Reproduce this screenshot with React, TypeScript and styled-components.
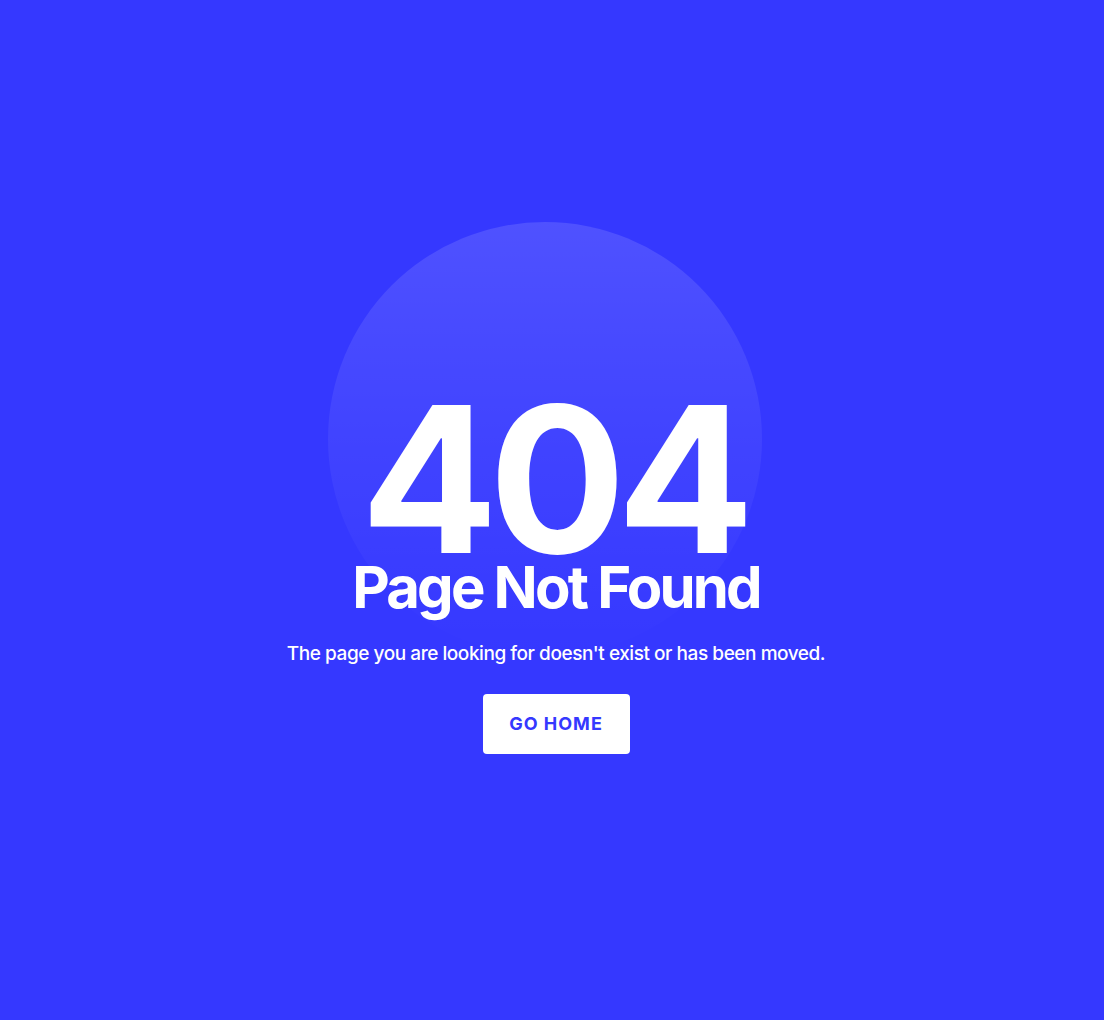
import styled, { createGlobalStyle } from 'styled-components';

const GlobalStyle = createGlobalStyle`
  html, body {
    margin: 0;
    padding: 0;
    background: #3538ff;
  }
  body {
    font-family: Inter, "Noto Sans", "Liberation Sans", sans-serif;
  }
`;

const Page = styled.main`
  min-height: 1020px;
  box-sizing: border-box;
  display: flex;
  flex-direction: column;
  align-items: center;
  padding: 222px 0 0 8px;
  background: #3538ff;
  color: #fff;
`;

const Hero = styled.div`
  position: relative;
  display: flex;
  flex-direction: column;
  align-items: center;
`;

const Glow = styled.div`
  position: absolute;
  top: 0;
  left: 50%;
  width: 434px;
  height: 434px;
  margin-left: -228px;
  border-radius: 50%;
  background: linear-gradient(
    180deg,
    rgba(255, 255, 255, 0.13) 0%,
    rgba(255, 255, 255, 0.06) 50%,
    rgba(255, 255, 255, 0) 100%
  );
  pointer-events: none;
`;

const Code = styled.h1`
  position: relative;
  margin: 181px 0 0;
  padding-right: 6px;
  font-size: 203px;
  font-weight: 700;
  line-height: 0.75;
  letter-spacing: -9px;
`;

const Title = styled.h2`
  position: relative;
  margin: 9px 0 0;
  font-size: 58px;
  font-weight: 700;
  line-height: 0.8;
  letter-spacing: -2.8px;
`;

const Message = styled.p`
  margin: 31px 0 0;
  font-size: 19px;
  font-weight: 500;
  letter-spacing: -0.45px;
`;

const HomeButton = styled.a`
  margin-top: 29px;
  display: inline-flex;
  align-items: center;
  justify-content: center;
  width: 147px;
  height: 60px;
  background: #fff;
  border-radius: 4px;
  color: #3538ff;
  font-size: 18px;
  font-weight: 700;
  letter-spacing: 1px;
  text-decoration: none;
  cursor: pointer;
`;

export default function App() {
  return (
    <>
      <GlobalStyle />
      <Page>
        <Hero>
          <Glow />
          <Code>404</Code>
          <Title>Page Not Found</Title>
        </Hero>
        <Message>The page you are looking for doesn't exist or has been moved.</Message>
        <HomeButton href="#">GO HOME</HomeButton>
      </Page>
    </>
  );
}
